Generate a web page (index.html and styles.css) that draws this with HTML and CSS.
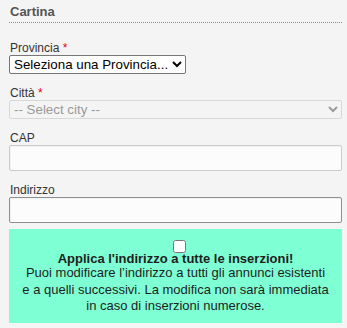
FILE: index.html
```html
<!DOCTYPE html>
<html lang="it">
<head>
  <meta charset="UTF-8">
  <meta name="viewport" content="width=device-width, initial-scale=1">
  <title>Cartina</title>
  <link rel="stylesheet" href="styles.css">
</head>
<body>
  <div id="map-form">
    <h3 class="section-title">Cartina</h3>

    <div class="field field-first">
      <label class="field-label" for="province">Provincia <span class="req">*</span></label>
      <select id="province" class="select">
        <option>Seleziona una Provincia...</option>
      </select>
    </div>

    <div class="field">
      <label class="field-label" for="city">Città <span class="req">*</span></label>
      <select id="city" class="select select-wide" disabled>
        <option>-- Select city --</option>
      </select>
    </div>

    <div class="field">
      <label class="field-label" for="cap">CAP</label>
      <input id="cap" class="text-input" type="text">
    </div>

    <div class="field">
      <label class="field-label" for="address">Indirizzo</label>
      <input id="address" class="text-input is-hover" type="text">
    </div>

    <div class="apply-box">
      <div class="apply-check"><input type="checkbox" id="applyAll"></div>
      <label class="apply-title" for="applyAll">Applica l'indirizzo a tutte le inserzioni!</label>
      <p class="apply-text">Puoi modificare l’indirizzo a tutti gli annunci esistenti<br>e a quelli successivi. La modifica non sarà immediata in caso di inserzioni numerose.</p>
    </div>
  </div>
</body>
</html>
```

FILE: styles.css
```css
:root {
  --bg-color: #f4f4f4;
  --text-color: #333333;
  --title-color: #555555;
  --req-color: #e8001c;
  --apply-bg: #7fffd4;
}
* {
  box-sizing: border-box;
  margin: 0;
  padding: 0;
}
body {
  font-family: 'Liberation Sans', Arial, sans-serif;
  background: var(--bg-color);
  color: var(--text-color);
}
#map-form {
  width: 342px;
  padding: 4px 0 0 9px;
}
.section-title {
  font-size: 13px;
  line-height: 16px;
  font-weight: 700;
  color: var(--title-color);
  padding: 0 0 2px 1px;
  border-bottom: 1px dotted #8c8c8c;
}
.field {
  margin-top: 12px;
}
.field-first {
  margin-top: 18px;
}
.field-label {
  display: block;
  font-size: 12px;
  line-height: 14px;
  padding-left: 1px;
}
.req {
  color: var(--req-color);
}
.select {
  display: block;
  height: 19px;
  font-family: 'Liberation Sans', Arial, sans-serif;
  font-size: 13.33px;
  color: #000;
  background: #fff;
  border: 1px solid #767676;
  border-radius: 2px;
}
.select-wide {
  width: 100%;
}
.select:disabled {
  color: #9a9a9a;
  background: #f4f4f4;
  border-color: #d8d8d8;
  opacity: 1;
}
.text-input {
  display: block;
  width: 100%;
  height: 26px;
  background: #fcfcfc;
  border: 1px solid #cccccc;
  border-radius: 2px;
  box-shadow: inset 1px 1px 1px rgba(0,0,0,0.04);
  font-family: 'Liberation Sans', Arial, sans-serif;
  font-size: 13px;
}
.text-input.is-hover {
  border-color: #8f8f8f;
}
.apply-box {
  margin-top: 6px;
  background: var(--apply-bg);
  padding: 11px 8px 8px;
  text-align: center;
  color: #1e1e1e;
  font-size: 13px;
}
.apply-check {
  height: 13px;
  line-height: 13px;
}
.apply-check input {
  width: 13px;
  height: 13px;
  margin: 0 0 0 8px;
  vertical-align: top;
}
.apply-title {
  display: block;
  font-weight: 700;
  line-height: 12px;
}
.apply-text {
  line-height: 16.5px;
}
```
